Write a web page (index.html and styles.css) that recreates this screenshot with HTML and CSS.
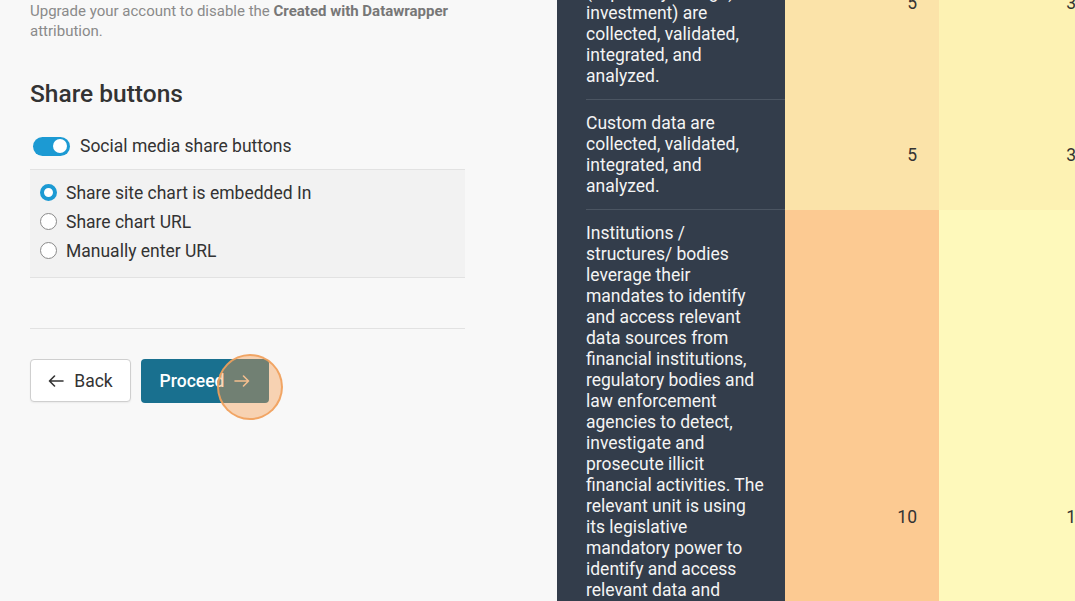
FILE: index.html
```html
<!DOCTYPE html>
<html>
<head>
<meta charset="utf-8">
<link rel="stylesheet" href="styles.css">
</head>
<body>
<div class="page">
  <section class="sidebar">
    <p class="note">Upgrade your account to disable the <b>Created with Datawrapper</b> attribution.</p>
    <h2 class="heading">Share buttons</h2>
    <label class="toggle-row">
      <span class="toggle"><span class="knob"></span></span>
      <span class="toggle-label">Social media share buttons</span>
    </label>
    <div class="options">
      <div class="radio-row"><span class="radio checked"></span><span>Share site chart is embedded In</span></div>
      <div class="radio-row"><span class="radio"></span><span>Share chart URL</span></div>
      <div class="radio-row"><span class="radio"></span><span>Manually enter URL</span></div>
    </div>
    <hr class="divider">
    <div class="actions">
      <button class="btn btn-back">
        <svg width="16" height="12" viewBox="0 0 16 12"><path d="M15 6H1.5M6.5 1 1.5 6l5 5" fill="none" stroke="#333" stroke-width="1.6" stroke-linecap="round" stroke-linejoin="round"/></svg>
        <span>Back</span>
      </button>
      <div class="proceed-wrap">
        <button class="btn btn-proceed">
          <span>Proceed</span>
          <svg width="16" height="12" viewBox="0 0 16 12"><path d="M1 6h13.5M9.5 1l5 5-5 5" fill="none" stroke="#f3d7bd" stroke-width="1.6" stroke-linecap="round" stroke-linejoin="round"/></svg>
        </button>
        <span class="click-dot"></span>
      </div>
    </div>
  </section>
  <section class="preview">
    <table class="grid">
      <colgroup><col class="c1"><col class="c2"><col class="c3"></colgroup>
      <tr>
        <td class="label"><div>Relevant data on<br>illicit financial flows<br>(e.g. trade, tax and<br>(especially foreign)<br>investment) are<br>collected, validated,<br>integrated, and<br>analyzed.</div></td>
        <td class="num a1">5</td>
        <td class="num b1">3</td>
      </tr>
      <tr>
        <td class="label"><div>Custom data are collected, validated, integrated, and analyzed.</div></td>
        <td class="num a1">5</td>
        <td class="num b1">3</td>
      </tr>
      <tr>
        <td class="label"><div>Institutions / structures/ bodies leverage their mandates to identify and access relevant data sources from financial institutions, regulatory bodies and law enforcement agencies to detect, investigate and prosecute illicit financial activities. The relevant unit is using its legislative mandatory power to identify and access relevant data and information from financial institutions, tax and customs authorities, company registries and other competent bodies to track illicit financial flows and to recover the related proceeds of crime.</div></td>
        <td class="num a2">10</td>
        <td class="num b2">1</td>
      </tr>
    </table>
  </section>
</div>
</body>
</html>
```
FILE: styles.css
```css
* { box-sizing: border-box; }
html, body { margin: 0; padding: 0; }
body {
  font-family: Roboto, "Liberation Sans", sans-serif;
  background: #f8f8f8;
  color: #333;
}
.page {
  display: flex;
  width: 1075px;
  height: 601px;
  overflow: hidden;
}
.sidebar {
  width: 557px;
  flex: none;
  padding: 1px 92px 0 30px;
  background: #f8f8f8;
}
.note {
  margin: 0;
  font-size: 15px;
  line-height: 20px;
  color: #8a8a8a;
}
.note b { color: #777; font-weight: 700; }
.heading {
  margin: 39px 0 0;
  font-size: 24.5px;
  line-height: 28px;
  font-weight: 500;
  color: #333;
}
.toggle-row {
  display: flex;
  align-items: center;
  gap: 10px;
  height: 24px;
  margin-top: 26px;
  padding-left: 3px;
}
.toggle {
  width: 37px;
  height: 19px;
  border-radius: 10px;
  background: #1c9ad3;
  display: flex;
  align-items: center;
  justify-content: flex-end;
  padding-right: 3px;
}
.knob {
  width: 14px;
  height: 14px;
  border-radius: 50%;
  background: #fff;
}
.toggle-label { font-size: 17.5px; color: #333; }
.options {
  margin-top: 11px;
  background: #f2f2f2;
  border-top: 1px solid #e2e2e2;
  border-bottom: 1px solid #e2e2e2;
  padding: 8px 0 12px 10px;
}
.radio-row {
  display: flex;
  align-items: center;
  gap: 9px;
  height: 29px;
  font-size: 17.5px;
  color: #333;
}
.radio {
  width: 17px;
  height: 17px;
  border-radius: 50%;
  border: 1px solid #8a8a8a;
  background: #fff;
  flex: none;
}
.radio.checked {
  border: 4.5px solid #1c9ad3;
}
.divider {
  margin: 50px 0 0;
  border: 0;
  border-top: 1px solid #e2e2e2;
  height: 0;
}
.actions {
  display: flex;
  gap: 10px;
  margin-top: 30px;
  align-items: flex-start;
}
.btn {
  font-family: inherit;
  font-size: 17.5px;
  display: flex;
  align-items: center;
  justify-content: center;
  gap: 10px;
  border-radius: 4px;
  cursor: pointer;
}
.btn-back {
  width: 101px;
  height: 43px;
  background: #fff;
  border: 1px solid #cfcfcf;
  color: #333;
  box-shadow: 0 1px 2px rgba(0,0,0,0.06);
}
.proceed-wrap { position: relative; }
.btn-proceed {
  width: 128px;
  height: 44px;
  background: #19708f;
  border: 0;
  color: #fff;
  font-weight: 500;
}
.click-dot {
  position: absolute;
  left: 76px;
  top: -5px;
  width: 66px;
  height: 66px;
  border-radius: 50%;
  border: 2px solid rgba(241, 160, 92, 0.9);
  background: rgba(244, 152, 72, 0.4);
}
.preview {
  flex: 1;
  overflow: hidden;
  background: #333d4b;
}
.grid {
  border-collapse: collapse;
  table-layout: fixed;
  width: 541px;
  margin-top: -94px;
}
.c1 { width: 228px; }
.c2 { width: 154px; }
.c3 { width: 159px; }
.grid td { padding: 0; }
.label {
  background: #333d4b;
  padding-left: 29px !important;
  vertical-align: top;
}
.label div {
  padding: 13px 20px 12px 0;
  border-bottom: 1px solid #4b5562;
  color: #f4f4f4;
  font-size: 17.5px;
  line-height: 21px;
}
.num {
  text-align: right;
  padding-right: 22px !important;
  vertical-align: middle;
  font-size: 17.5px;
  color: #333;
}
.a1 { background: #fbe3a9; }
.b1 { background: #fdf2b3; }
.a2 { background: #fcca92; }
.b2 { background: #fef9bb; }
```
